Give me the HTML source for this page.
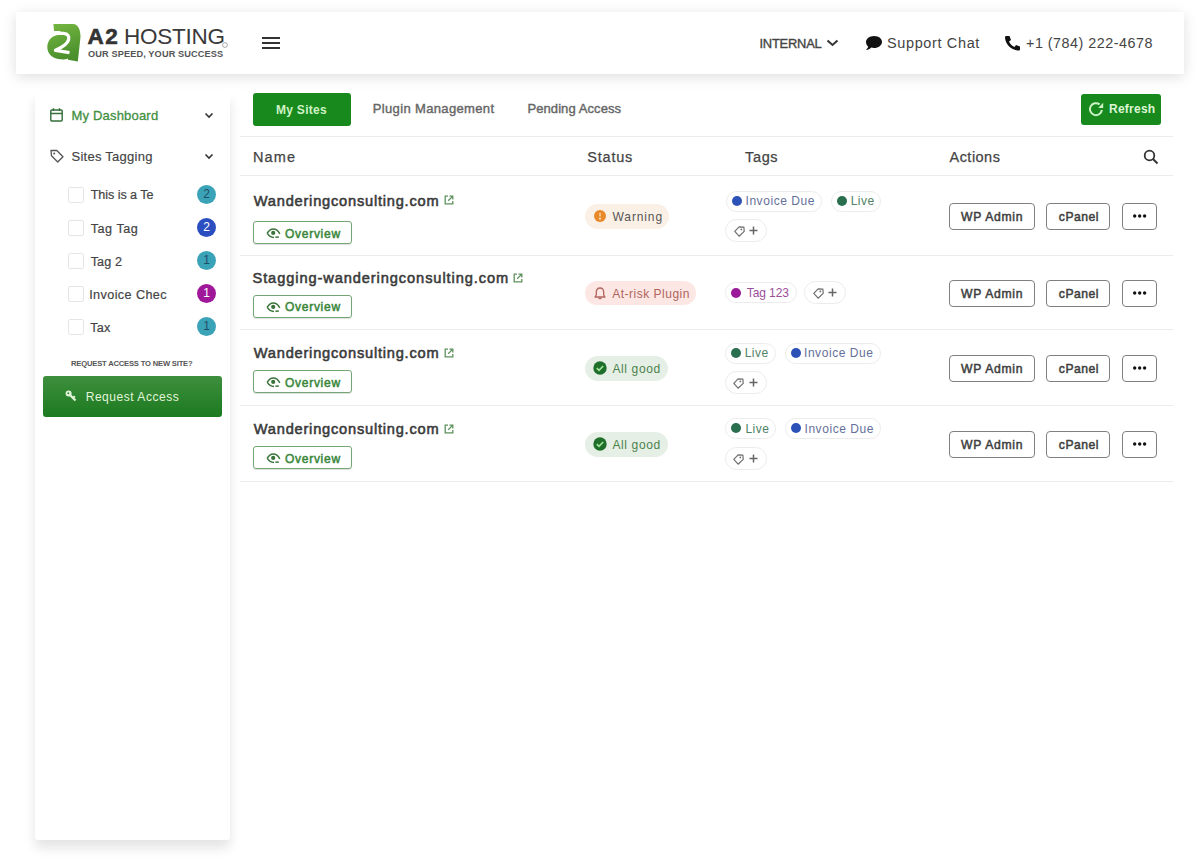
<!DOCTYPE html>
<html><head><meta charset="utf-8">
<style>
*{margin:0;padding:0;box-sizing:border-box}
html,body{width:1200px;height:862px;overflow:hidden;background:#fff;font-family:"Liberation Sans",sans-serif;color:#444}
.a{position:absolute}
.t{position:absolute;white-space:nowrap;line-height:1}
#hdr{left:16px;top:12px;width:1168px;height:62px;background:#fff;box-shadow:0 3px 13px rgba(0,0,0,.13)}
#side{left:35px;top:92px;width:195px;height:748px;background:#fff;box-shadow:0 8px 12px rgba(0,0,0,.11);border-radius:3px}
.hl{position:absolute;left:240px;width:933px;height:1px;background:#ececec}
.cb{position:absolute;left:68px;width:16px;height:16px;border:1px solid #e6e6e6;border-radius:2px}
.bd{position:absolute;left:197px;width:19px;height:19px;border-radius:50%;font-size:12px;line-height:19px;text-align:center}
.tag{position:absolute;height:21px;border:1px solid #ececec;border-radius:11px;background:#fff}
.dot{width:10px;height:10px;border-radius:50%}
.ov{position:absolute;left:253px;width:99px;height:23px;border:1.2px solid #73a673;border-radius:3px;box-shadow:0 1px 1px rgba(0,0,0,.13)}
.btn{position:absolute;height:27px;border:1.2px solid #808080;border-radius:4px;background:#fff}
.pill{position:absolute;border-radius:13px}
</style></head><body>
<div id="hdr" class="a"></div>
<svg class="a" style="left:42px;top:18px" width="44" height="48" viewBox="0 0 44 48">
<defs><linearGradient id="lg" x1="0" y1="0" x2="0.3" y2="1"><stop offset="0" stop-color="#76b843"/><stop offset="1" stop-color="#4a8f2c"/></linearGradient></defs>
<path d="M11.4 6.1 L31 6 C36 6.5 38.5 11 38.5 19 L35.8 43.5 L26 41.8 L26 40.5 C23 41.5 21 41.6 18 41.3 C10 40.5 5.2 35.5 5.3 29 C5.4 22 10.5 17 18.4 16.5 L18.4 13.1 L12 13.1 Z" fill="url(#lg)"/>
<path d="M11 15.3 L21.5 15.3 C26 15.5 27.5 18.5 26.5 22 C25.5 25.5 21 29 13.5 32.3 L27.5 34.6" fill="none" stroke="#fff" stroke-width="3.3" stroke-linejoin="round"/>
</svg>
<div class="t" style="left:87.5px;top:25.6px;font-size:22.5px;font-weight:bold;color:#333;letter-spacing:1.6px;-webkit-text-stroke:0.6px #333">A2</div>
<div class="t" style="left:124px;top:25.6px;font-size:22.5px;color:#333;letter-spacing:-0.25px;color:#3a3a3a">HOSTING</div>
<svg class="a" style="left:222px;top:42px" width="6" height="6" viewBox="0 0 6 6"><circle cx="3" cy="3" r="2.4" fill="none" stroke="#888" stroke-width="0.7"/></svg>
<div class="t" style="left:88px;top:49.8px;font-size:9.2px;font-weight:bold;color:#555;letter-spacing:0.12px">OUR SPEED, YOUR SUCCESS</div>
<div class="a" style="left:262px;top:37px;width:18px;height:2px;background:#333"></div>
<div class="a" style="left:262px;top:42px;width:18px;height:2px;background:#333"></div>
<div class="a" style="left:262px;top:47px;width:18px;height:2px;background:#333"></div>
<svg class="a" style="left:826px;top:39px" width="13" height="8" viewBox="0 0 13 8"><path d="M1.5 1.5 L6.5 6 L11.5 1.5" fill="none" stroke="#333" stroke-width="2"/></svg>
<svg class="a" style="left:865px;top:35px" width="18" height="16" viewBox="0 0 18 16"><path d="M9 1 C14 1 17 3.8 17 7 C17 10.3 13.5 13 9 13 C8 13 7 12.9 6.2 12.6 C5 13.8 3 15 1 15 C2 14 3 12.8 3.2 11.6 C1.8 10.5 1 8.8 1 7 C1 3.8 4.5 1 9 1 Z" fill="#111"/></svg>
<svg class="a" style="left:1003px;top:34.5px" width="18" height="16" viewBox="0 0 18 16"><path d="M3.5 1 L6.5 1 L8 5 L6 6.5 C7 9 9 11 11.5 12 L13 10 L17 11.5 L17 14.5 C17 15 16.5 15.5 16 15.5 C8 15.5 2 9 2 2 C2 1.5 2.8 1 3.5 1 Z" fill="#111"/></svg>
<div id="side" class="a"></div>
<svg class="a" style="left:50px;top:108px" width="13" height="14" viewBox="0 0 13 14"><rect x="0.8" y="2" width="11.4" height="11" rx="1" fill="none" stroke="#356f3a" stroke-width="1.4"/><path d="M0.8 5.5 H12.2 M3.5 0.3 V3 M9.5 0.3 V3" stroke="#356f3a" stroke-width="1.4"/></svg>
<svg class="a" style="left:50px;top:149.3px" width="14" height="14" viewBox="0 0 14 14"><path d="M1 1.5 H6.8 L13 7.7 L7.7 13 L1.5 6.8 Z" fill="none" stroke="#555" stroke-width="1.3" stroke-linejoin="round"/><circle cx="4.2" cy="4.5" r="1" fill="#555"/></svg>
<svg class="a" style="left:203.7px;top:112.2px" width="10" height="7" viewBox="0 0 10 7"><path d="M1.5 1.5 L5 5 L8.5 1.5" fill="none" stroke="#333" stroke-width="1.6"/></svg>
<svg class="a" style="left:203.7px;top:153.2px" width="10" height="7" viewBox="0 0 10 7"><path d="M1.5 1.5 L5 5 L8.5 1.5" fill="none" stroke="#333" stroke-width="1.6"/></svg>
<div class="cb" style="top:187.0px"></div>
<div class="bd" style="top:185.0px;background:#3ba3b8;color:#1f4f66">2</div>
<div class="cb" style="top:220.0px"></div>
<div class="bd" style="top:218.0px;background:#2b4fc0;color:#fff">2</div>
<div class="cb" style="top:253.0px"></div>
<div class="bd" style="top:251.0px;background:#3ba3b8;color:#1f4f66">1</div>
<div class="cb" style="top:286.0px"></div>
<div class="bd" style="top:284.0px;background:#a0189a;color:#fff">1</div>
<div class="cb" style="top:319.0px"></div>
<div class="bd" style="top:317.0px;background:#3ba3b8;color:#1f4f66">1</div>
<div class="a" style="left:43px;top:376px;width:179px;height:41px;border-radius:3px;background:linear-gradient(#3e8f3e,#1c7a1f)"></div>
<svg class="a" style="left:65px;top:390px" width="12" height="12" viewBox="0 0 12 12"><circle cx="3.6" cy="3.6" r="3" fill="#e2f5da"/><path d="M4.5 4.5 L10.5 10.5 M8 8 L9.8 6.2" stroke="#e2f5da" stroke-width="2.2"/><circle cx="3.3" cy="3.3" r="1" fill="#3a8c3a"/></svg>
<div class="a" style="left:253px;top:93px;width:98px;height:33px;background:#17891d;border-radius:3px"></div>
<div class="a" style="left:1081px;top:94px;width:80px;height:31px;background:#17891d;border-radius:3px"></div>
<svg class="a" style="left:1088px;top:101px" width="16" height="16" viewBox="0 0 16 16"><path d="M13.9 9 A6 6 0 1 1 11.6 3.4" fill="none" stroke="#cdf3c5" stroke-width="2"/><path d="M10.2 7.1 L15.2 7.1 L15.2 1.7 Z" fill="#cdf3c5"/></svg>
<div class="hl" style="top:136px"></div>
<div class="hl" style="top:175px"></div>
<div class="hl" style="top:255px"></div>
<div class="hl" style="top:329px"></div>
<div class="hl" style="top:405px"></div>
<div class="hl" style="top:481px"></div>
<svg class="a" style="left:1143px;top:148.6px" width="16" height="16" viewBox="0 0 16 16"><circle cx="6.5" cy="6.5" r="4.8" fill="none" stroke="#333" stroke-width="1.8"/><path d="M10 10 L14.5 14.5" stroke="#333" stroke-width="2"/></svg>
<div class="ov" style="top:221.3px"></div>
<svg class="a" style="left:265.8px;top:227.9px" width="15" height="11" viewBox="0 0 15 11"><path d="M1.2 5.2 C3 2 5 0.9 7.2 0.9 C9.5 0.9 12 2.2 13.8 5.8 M1.2 5.2 C3 8.3 5 9.4 8 9.5" fill="none" stroke="#3a743a" stroke-width="1.5"/><path d="M9.4 9.3 L12.8 9" stroke="#3a743a" stroke-width="1.6"/><circle cx="7.2" cy="4.9" r="2.1" fill="#3a743a"/></svg>
<svg class="a" style="left:443.8px;top:195.4px" width="10" height="10" viewBox="0 0 10 10"><path d="M4 1.2 H1.2 V8.8 H8.8 V6" fill="none" stroke="#5e925e" stroke-width="1.3"/><path d="M5.5 1.2 H8.8 V4.5 M8.6 1.4 L4.2 5.8" fill="none" stroke="#5e925e" stroke-width="1.3"/></svg>
<div class="pill" style="left:585px;top:203.5px;width:84px;height:25px;background:#fbf0e6"></div>
<svg class="a" style="left:594px;top:210px" width="12" height="12" viewBox="0 0 12 12"><circle cx="6" cy="6" r="6" fill="#e8892a"/><path d="M6 2.8 V6.6" stroke="#f7d3a8" stroke-width="1.5"/><circle cx="6" cy="8.6" r="0.9" fill="#fff"/></svg>
<div class="btn" style="left:949px;top:203px;width:86px"></div>
<div class="btn" style="left:1046px;top:203px;width:64px"></div>
<div class="btn" style="left:1122px;top:203px;width:35px"></div>
<svg class="a" style="left:1130px;top:213px" width="19" height="6" viewBox="0 0 19 6"><circle cx="4.7" cy="3" r="1.7" fill="#111"/><circle cx="9.7" cy="3" r="1.7" fill="#111"/><circle cx="14.6" cy="3" r="1.7" fill="#111"/></svg>
<div class="tag" style="left:726px;top:190.5px;width:96px"></div><div class="dot" style="left:732px;top:195.5px;background:#2c52b8;position:absolute"></div>
<div class="tag" style="left:831px;top:190.5px;width:50px"></div><div class="dot" style="left:837px;top:195.5px;background:#2a6e50;position:absolute"></div>
<div class="tag" style="left:725px;top:218.7px;width:42px;height:23px;border-radius:12px"></div>
<svg class="a" style="left:733.6px;top:226.1px" width="11" height="11" viewBox="0 0 11 11"><path d="M5.1 0.8 L9.9 1.2 L10.2 5.4 L5.1 10.2 L0.8 5.4 Z" fill="none" stroke="#707070" stroke-width="1.2" stroke-linejoin="round"/><circle cx="7.3" cy="3.4" r="0.9" fill="#707070"/></svg>
<svg class="a" style="left:749px;top:225.7px" width="9" height="9" viewBox="0 0 9 9"><path d="M4.5 0.5 V8.5 M0.5 4.5 H8.5" stroke="#666" stroke-width="1.5"/></svg>
<div class="ov" style="top:295.2px"></div>
<svg class="a" style="left:265.8px;top:301.8px" width="15" height="11" viewBox="0 0 15 11"><path d="M1.2 5.2 C3 2 5 0.9 7.2 0.9 C9.5 0.9 12 2.2 13.8 5.8 M1.2 5.2 C3 8.3 5 9.4 8 9.5" fill="none" stroke="#3a743a" stroke-width="1.5"/><path d="M9.4 9.3 L12.8 9" stroke="#3a743a" stroke-width="1.6"/><circle cx="7.2" cy="4.9" r="2.1" fill="#3a743a"/></svg>
<svg class="a" style="left:512.8px;top:273.0px" width="10" height="10" viewBox="0 0 10 10"><path d="M4 1.2 H1.2 V8.8 H8.8 V6" fill="none" stroke="#5e925e" stroke-width="1.3"/><path d="M5.5 1.2 H8.8 V4.5 M8.6 1.4 L4.2 5.8" fill="none" stroke="#5e925e" stroke-width="1.3"/></svg>
<div class="pill" style="left:585px;top:281.2px;width:111px;height:24px;background:#fce7e4"></div>
<svg class="a" style="left:594px;top:286.5px" width="12" height="13" viewBox="0 0 12 13"><path d="M6 1 C3.5 1 2.3 3 2.3 5 V8 L1 10 H11 L9.7 8 V5 C9.7 3 8.5 1 6 1 Z" fill="none" stroke="#b0645c" stroke-width="1.3" stroke-linejoin="round"/><path d="M4.5 11.5 H7.5" stroke="#b0645c" stroke-width="1.3"/></svg>
<div class="btn" style="left:949px;top:280px;width:86px"></div>
<div class="btn" style="left:1046px;top:280px;width:64px"></div>
<div class="btn" style="left:1122px;top:280px;width:35px"></div>
<svg class="a" style="left:1130px;top:290px" width="19" height="6" viewBox="0 0 19 6"><circle cx="4.7" cy="3" r="1.7" fill="#111"/><circle cx="9.7" cy="3" r="1.7" fill="#111"/><circle cx="14.6" cy="3" r="1.7" fill="#111"/></svg>
<div class="tag" style="left:725px;top:282.4px;width:72px"></div><div class="dot" style="left:731px;top:287.9px;background:#9a1a9a;position:absolute"></div>
<div class="tag" style="left:804px;top:281.4px;width:42px;height:23px;border-radius:12px"></div>
<svg class="a" style="left:812.6px;top:288.09999999999997px" width="11" height="11" viewBox="0 0 11 11"><path d="M5.1 0.8 L9.9 1.2 L10.2 5.4 L5.1 10.2 L0.8 5.4 Z" fill="none" stroke="#707070" stroke-width="1.2" stroke-linejoin="round"/><circle cx="7.3" cy="3.4" r="0.9" fill="#707070"/></svg>
<svg class="a" style="left:828px;top:288.4px" width="9" height="9" viewBox="0 0 9 9"><path d="M4.5 0.5 V8.5 M0.5 4.5 H8.5" stroke="#666" stroke-width="1.5"/></svg>
<div class="ov" style="top:370.4px"></div>
<svg class="a" style="left:265.8px;top:377.0px" width="15" height="11" viewBox="0 0 15 11"><path d="M1.2 5.2 C3 2 5 0.9 7.2 0.9 C9.5 0.9 12 2.2 13.8 5.8 M1.2 5.2 C3 8.3 5 9.4 8 9.5" fill="none" stroke="#3a743a" stroke-width="1.5"/><path d="M9.4 9.3 L12.8 9" stroke="#3a743a" stroke-width="1.6"/><circle cx="7.2" cy="4.9" r="2.1" fill="#3a743a"/></svg>
<svg class="a" style="left:443.8px;top:347.90000000000003px" width="10" height="10" viewBox="0 0 10 10"><path d="M4 1.2 H1.2 V8.8 H8.8 V6" fill="none" stroke="#5e925e" stroke-width="1.3"/><path d="M5.5 1.2 H8.8 V4.5 M8.6 1.4 L4.2 5.8" fill="none" stroke="#5e925e" stroke-width="1.3"/></svg>
<div class="pill" style="left:585px;top:355.7px;width:83px;height:25px;background:#e6efe6"></div>
<svg class="a" style="left:593px;top:361.2px" width="14" height="14" viewBox="0 0 14 14"><circle cx="7" cy="7" r="6.7" fill="#1f6f2a"/><path d="M3.8 7.2 L6 9.3 L10.2 5" fill="none" stroke="#9fe39a" stroke-width="1.7"/></svg>
<div class="btn" style="left:949px;top:355px;width:86px"></div>
<div class="btn" style="left:1046px;top:355px;width:64px"></div>
<div class="btn" style="left:1122px;top:355px;width:35px"></div>
<svg class="a" style="left:1130px;top:365px" width="19" height="6" viewBox="0 0 19 6"><circle cx="4.7" cy="3" r="1.7" fill="#111"/><circle cx="9.7" cy="3" r="1.7" fill="#111"/><circle cx="14.6" cy="3" r="1.7" fill="#111"/></svg>
<div class="tag" style="left:725px;top:342.6px;width:51px"></div><div class="dot" style="left:731px;top:347.6px;background:#2a6e50;position:absolute"></div>
<div class="tag" style="left:784.5px;top:342.6px;width:96px"></div><div class="dot" style="left:790.5px;top:347.6px;background:#2c52b8;position:absolute"></div>
<div class="tag" style="left:724.5px;top:370.8px;width:42px;height:23px;border-radius:12px"></div>
<svg class="a" style="left:733.1px;top:378.2px" width="11" height="11" viewBox="0 0 11 11"><path d="M5.1 0.8 L9.9 1.2 L10.2 5.4 L5.1 10.2 L0.8 5.4 Z" fill="none" stroke="#707070" stroke-width="1.2" stroke-linejoin="round"/><circle cx="7.3" cy="3.4" r="0.9" fill="#707070"/></svg>
<svg class="a" style="left:748.5px;top:377.8px" width="9" height="9" viewBox="0 0 9 9"><path d="M4.5 0.5 V8.5 M0.5 4.5 H8.5" stroke="#666" stroke-width="1.5"/></svg>
<div class="ov" style="top:446.4px"></div>
<svg class="a" style="left:265.8px;top:453.0px" width="15" height="11" viewBox="0 0 15 11"><path d="M1.2 5.2 C3 2 5 0.9 7.2 0.9 C9.5 0.9 12 2.2 13.8 5.8 M1.2 5.2 C3 8.3 5 9.4 8 9.5" fill="none" stroke="#3a743a" stroke-width="1.5"/><path d="M9.4 9.3 L12.8 9" stroke="#3a743a" stroke-width="1.6"/><circle cx="7.2" cy="4.9" r="2.1" fill="#3a743a"/></svg>
<svg class="a" style="left:443.8px;top:423.6px" width="10" height="10" viewBox="0 0 10 10"><path d="M4 1.2 H1.2 V8.8 H8.8 V6" fill="none" stroke="#5e925e" stroke-width="1.3"/><path d="M5.5 1.2 H8.8 V4.5 M8.6 1.4 L4.2 5.8" fill="none" stroke="#5e925e" stroke-width="1.3"/></svg>
<div class="pill" style="left:585px;top:431.7px;width:83px;height:25px;background:#e6efe6"></div>
<svg class="a" style="left:593px;top:437.2px" width="14" height="14" viewBox="0 0 14 14"><circle cx="7" cy="7" r="6.7" fill="#1f6f2a"/><path d="M3.8 7.2 L6 9.3 L10.2 5" fill="none" stroke="#9fe39a" stroke-width="1.7"/></svg>
<div class="btn" style="left:949px;top:431px;width:86px"></div>
<div class="btn" style="left:1046px;top:431px;width:64px"></div>
<div class="btn" style="left:1122px;top:431px;width:35px"></div>
<svg class="a" style="left:1130px;top:441px" width="19" height="6" viewBox="0 0 19 6"><circle cx="4.7" cy="3" r="1.7" fill="#111"/><circle cx="9.7" cy="3" r="1.7" fill="#111"/><circle cx="14.6" cy="3" r="1.7" fill="#111"/></svg>
<div class="tag" style="left:725px;top:418.3px;width:51px"></div><div class="dot" style="left:731px;top:423.3px;background:#2a6e50;position:absolute"></div>
<div class="tag" style="left:784.5px;top:418.3px;width:96px"></div><div class="dot" style="left:790.5px;top:423.3px;background:#2c52b8;position:absolute"></div>
<div class="tag" style="left:724.5px;top:446.5px;width:42px;height:23px;border-radius:12px"></div>
<svg class="a" style="left:733.1px;top:453.9px" width="11" height="11" viewBox="0 0 11 11"><path d="M5.1 0.8 L9.9 1.2 L10.2 5.4 L5.1 10.2 L0.8 5.4 Z" fill="none" stroke="#707070" stroke-width="1.2" stroke-linejoin="round"/><circle cx="7.3" cy="3.4" r="0.9" fill="#707070"/></svg>
<svg class="a" style="left:748.5px;top:453.5px" width="9" height="9" viewBox="0 0 9 9"><path d="M4.5 0.5 V8.5 M0.5 4.5 H8.5" stroke="#666" stroke-width="1.5"/></svg>
<div id="internal" class="t" style="left:759.4px;top:38px;font-size:12.9px;letter-spacing:-0.199px;-webkit-text-stroke:0.35px #444;color:#444">INTERNAL</div>
<div id="support" class="t" style="left:887px;top:36px;font-size:14.49px;letter-spacing:0.636px;color:#444">Support Chat</div>
<div id="phone" class="t" style="left:1026px;top:36px;font-size:14.35px;letter-spacing:0.5px;color:#444">+1 (784) 222-4678</div>
<div id="dash" class="t" style="left:71.5px;top:109px;font-size:13.04px;letter-spacing:0.172px;-webkit-text-stroke:0.3px #3f8f3f;color:#3f8f3f">My Dashboard</div>
<div id="stag" class="t" style="left:71.5px;top:150px;font-size:13.04px;letter-spacing:0.25px;-webkit-text-stroke:0.15px #444;color:#444">Sites Tagging</div>
<div id="t1" class="t" style="left:90.7px;top:189px;font-size:12.61px;letter-spacing:-0.064px;-webkit-text-stroke:0.2px #444;color:#444">This is a Te</div>
<div id="t2" class="t" style="left:90.7px;top:223px;font-size:12.61px;letter-spacing:0.534px;-webkit-text-stroke:0.2px #444;color:#444">Tag Tag</div>
<div id="t3" class="t" style="left:90.7px;top:256px;font-size:12.61px;letter-spacing:0.1px;-webkit-text-stroke:0.2px #444;color:#444">Tag 2</div>
<div id="t4" class="t" style="left:89.2px;top:289px;font-size:12.61px;letter-spacing:0.409px;-webkit-text-stroke:0.2px #444;color:#444">Invoice Chec</div>
<div id="t5" class="t" style="left:90.2px;top:322px;font-size:12.61px;letter-spacing:0.2px;-webkit-text-stroke:0.2px #444;color:#444">Tax</div>
<div id="reqq" class="t" style="left:71px;top:360px;font-size:7.6px;letter-spacing:-0.173px;font-weight:bold;color:#555">REQUEST ACCESS TO NEW SITE?</div>
<div id="reqb" class="t" style="left:85.7px;top:391px;font-size:12.03px;letter-spacing:0.531px;color:#e2f5da">Request Access</div>
<div id="mysites" class="t" style="left:276px;top:104px;font-size:12.03px;letter-spacing:0.272px;font-weight:bold;color:#cff3c6">My Sites</div>
<div id="plugin" class="t" style="left:372.8px;top:102px;font-size:13.04px;letter-spacing:0.331px;-webkit-text-stroke:0.4px #666;color:#666">Plugin Management</div>
<div id="pending" class="t" style="left:527.4px;top:102px;font-size:13.04px;letter-spacing:0.077px;-webkit-text-stroke:0.4px #666;color:#666">Pending Access</div>
<div id="refresh" class="t" style="left:1109px;top:103px;font-size:12.03px;letter-spacing:0.234px;font-weight:bold;color:#ddf6d5">Refresh</div>
<div id="hname" class="t" style="left:253px;top:150px;font-size:14.49px;letter-spacing:1.133px;-webkit-text-stroke:0.25px #444;color:#444">Name</div>
<div id="hstatus" class="t" style="left:587.3px;top:150px;font-size:14.49px;letter-spacing:0.78px;-webkit-text-stroke:0.25px #444;color:#444">Status</div>
<div id="htags" class="t" style="left:745px;top:150px;font-size:14.49px;letter-spacing:0.667px;-webkit-text-stroke:0.25px #444;color:#444">Tags</div>
<div id="hactions" class="t" style="left:949.5px;top:150px;font-size:14.49px;letter-spacing:0.483px;-webkit-text-stroke:0.25px #444;color:#444">Actions</div>
<div id="n1" class="t" style="left:253.8px;top:194px;font-size:14.64px;letter-spacing:0.777px;-webkit-text-stroke:0.55px #3a3a3a;color:#3a3a3a">Wanderingconsulting.com</div>
<div id="n2" class="t" style="left:252.5px;top:271px;font-size:14.64px;letter-spacing:0.903px;-webkit-text-stroke:0.55px #3a3a3a;color:#3a3a3a">Stagging-wanderingconsulting.com</div>
<div id="ov" class="t" style="left:285px;top:228px;font-size:12.03px;letter-spacing:0.714px;-webkit-text-stroke:0.5px #3a873a;color:#3a873a">Overview</div>
<div id="warn" class="t" style="left:612.6px;top:211px;font-size:12.03px;letter-spacing:0.867px;color:#555">Warning</div>
<div id="risk" class="t" style="left:612.3px;top:288px;font-size:12.03px;letter-spacing:0.485px;color:#b0645c">At-risk Plugin</div>
<div id="good" class="t" style="left:612.4px;top:363px;font-size:12.03px;letter-spacing:0.628px;color:#4b824b">All good</div>
<div id="inv" class="t" style="left:745.5px;top:195px;font-size:12.03px;letter-spacing:0.55px;color:#65709a">Invoice Due</div>
<div id="live" class="t" style="left:850.7px;top:195px;font-size:12.03px;letter-spacing:0.5px;color:#4f8266">Live</div>
<div id="tag123" class="t" style="left:746.8px;top:287px;font-size:12.03px;letter-spacing:-0.099px;color:#9a4f9a">Tag 123</div>
<div id="wp" class="t" style="left:961px;top:211px;font-size:12.17px;letter-spacing:0.714px;-webkit-text-stroke:0.5px #3f3f3f;color:#3f3f3f">WP Admin</div>
<div id="cp" class="t" style="left:1058.8px;top:211px;font-size:12.17px;letter-spacing:0.52px;-webkit-text-stroke:0.5px #3f3f3f;color:#3f3f3f">cPanel</div>
<div id="n3" class="t" style="left:253.8px;top:346px;font-size:14.64px;letter-spacing:0.777px;-webkit-text-stroke:0.55px #3a3a3a;color:#3a3a3a">Wanderingconsulting.com</div>
<div id="ov3" class="t" style="left:285px;top:377px;font-size:12.03px;letter-spacing:0.714px;-webkit-text-stroke:0.5px #3a873a;color:#3a873a">Overview</div>
<div id="wp3" class="t" style="left:961px;top:363px;font-size:12.17px;letter-spacing:0.714px;-webkit-text-stroke:0.5px #3f3f3f;color:#3f3f3f">WP Admin</div>
<div id="cp3" class="t" style="left:1058.8px;top:363px;font-size:12.17px;letter-spacing:0.52px;-webkit-text-stroke:0.5px #3f3f3f;color:#3f3f3f">cPanel</div>
<div id="ov2" class="t" style="left:285px;top:301px;font-size:12.03px;letter-spacing:0.714px;-webkit-text-stroke:0.5px #3a873a;color:#3a873a">Overview</div>
<div id="wp2" class="t" style="left:961px;top:288px;font-size:12.17px;letter-spacing:0.714px;-webkit-text-stroke:0.5px #3f3f3f;color:#3f3f3f">WP Admin</div>
<div id="cp2" class="t" style="left:1058.8px;top:288px;font-size:12.17px;letter-spacing:0.52px;-webkit-text-stroke:0.5px #3f3f3f;color:#3f3f3f">cPanel</div>
<div id="n4" class="t" style="left:253.8px;top:422px;font-size:14.64px;letter-spacing:0.777px;-webkit-text-stroke:0.55px #3a3a3a;color:#3a3a3a">Wanderingconsulting.com</div>
<div id="ov4" class="t" style="left:285px;top:453px;font-size:12.03px;letter-spacing:0.714px;-webkit-text-stroke:0.5px #3a873a;color:#3a873a">Overview</div>
<div id="good4" class="t" style="left:612.4px;top:439px;font-size:12.03px;letter-spacing:0.628px;color:#4b824b">All good</div>
<div id="wp4" class="t" style="left:961px;top:439px;font-size:12.17px;letter-spacing:0.714px;-webkit-text-stroke:0.5px #3f3f3f;color:#3f3f3f">WP Admin</div>
<div id="cp4" class="t" style="left:1058.8px;top:439px;font-size:12.17px;letter-spacing:0.52px;-webkit-text-stroke:0.5px #3f3f3f;color:#3f3f3f">cPanel</div>
<div id="live3" class="t" style="left:744.7px;top:347px;font-size:12.03px;letter-spacing:0.5px;color:#4f8266">Live</div>
<div id="inv3" class="t" style="left:804.0px;top:347px;font-size:12.03px;letter-spacing:0.55px;color:#65709a">Invoice Due</div>
<div id="live4" class="t" style="left:745.4px;top:423px;font-size:12.03px;letter-spacing:0.5px;color:#4f8266">Live</div>
<div id="inv4" class="t" style="left:804.5px;top:423px;font-size:12.03px;letter-spacing:0.55px;color:#65709a">Invoice Due</div>

</body></html>
